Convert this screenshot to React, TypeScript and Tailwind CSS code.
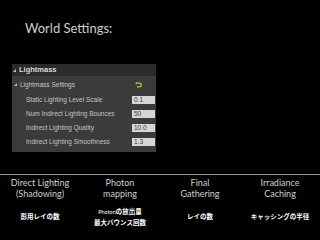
import React from 'react';

const rows = [
  { label: 'Static Lighting Level Scale', value: '0.1' },
  { label: 'Num Indirect Lighting Bounces', value: '50' },
  { label: 'Indirect Lighting Quality', value: '10.0' },
  { label: 'Indirect Lighting Smoothness', value: '1.3' },
];

const Arrow = () => (
  <span className="inline-block w-0 h-0 border-l-[3px] border-l-transparent border-b-[3px] border-b-[#bdbdbd] mr-[3px]" />
);

const ResetIcon = () => (
  <svg width="7" height="6" viewBox="0 0 7 6" className="block">
    <path d="M1 1.2 H4.5 A1.8 1.8 0 0 1 4.5 4.8 H2" fill="none" stroke="#b7c239" strokeWidth="1.3" />
    <path d="M0 1.2 L2 0 L2 2.4 Z" fill="#b7c239" />
  </svg>
);

const slide = { fontFamily: 'Lato, "Noto Sans CJK JP", sans-serif' };

export default function App() {
  return (
    <div
      className="w-[320px] h-[240px] bg-black overflow-hidden text-[#d4d4d4]"
      style={{ fontFamily: '"Liberation Sans", "Noto Sans CJK JP", sans-serif' }}
    >
      <div className="pt-[20px] pl-[25px] text-[13px] leading-[16px] text-[#cfcfcf]" style={slide}>
        World Settings:
      </div>

      <div className="ml-[12px] mt-[28px] w-[144px] h-[88px] bg-[#3b3b3b] flex flex-col">
        <div className="h-[12px] bg-[#2b2b2b] flex items-center pl-[1px] text-[7.5px] font-bold text-[#dcdcdc]">
          <Arrow />
          Lightmass
        </div>
        <div className="h-[13px] mt-[2px] flex items-center pl-[2px] pr-[14px] text-[6.5px] text-[#c8c8c8]">
          <Arrow />
          <span className="flex-1">Lightmass Settings</span>
          <ResetIcon />
        </div>
        <div className="flex flex-col gap-[6px] mt-[5px]">
          {rows.map((r) => (
            <div key={r.label} className="h-[8px] flex items-center text-[6.5px]">
              <span className="pl-[14px] flex-1 text-[#c4c4c4]">{r.label}</span>
              <span className="w-[23px] h-[8px] mr-[1px] bg-[#d6d6d6] text-[#3a3a3a] pl-[2px] leading-[8px]">
                {r.value}
              </span>
            </div>
          ))}
        </div>
      </div>

      <div className="mt-[22px] h-px bg-[#9a9a9a]" />

      <div className="grid grid-cols-4 text-center mt-[2px]" style={slide}>
        <div className="flex flex-col items-center">
          <div className="text-[9px] leading-[11px] text-[#cfcfcf]">Direct Lighting<br />(Shadowing)</div>
          <div className="mt-[13px] text-[6.5px] font-bold text-white leading-[9px]">影用レイの数</div>
        </div>
        <div className="flex flex-col items-center">
          <div className="text-[9px] leading-[11px] text-[#cfcfcf]">Photon<br />mapping</div>
          <div className="mt-[8px] text-[6.5px] font-bold text-white leading-[9px]">
            <span className="text-[5.5px] font-normal">Photon</span>の放出量
          </div>
          <div className="mt-[1px] text-[6.5px] font-bold text-white leading-[9px]">最大バウンス回数</div>
        </div>
        <div className="flex flex-col items-center">
          <div className="text-[9px] leading-[11px] text-[#cfcfcf]">Final<br />Gathering</div>
          <div className="mt-[13px] text-[6.5px] font-bold text-white leading-[9px]">レイの数</div>
        </div>
        <div className="flex flex-col items-center">
          <div className="text-[9px] leading-[11px] text-[#cfcfcf]">Irradiance<br />Caching</div>
          <div className="mt-[13px] text-[6.5px] font-bold text-white leading-[9px]">キャッシングの半径</div>
        </div>
      </div>
    </div>
  );
}
